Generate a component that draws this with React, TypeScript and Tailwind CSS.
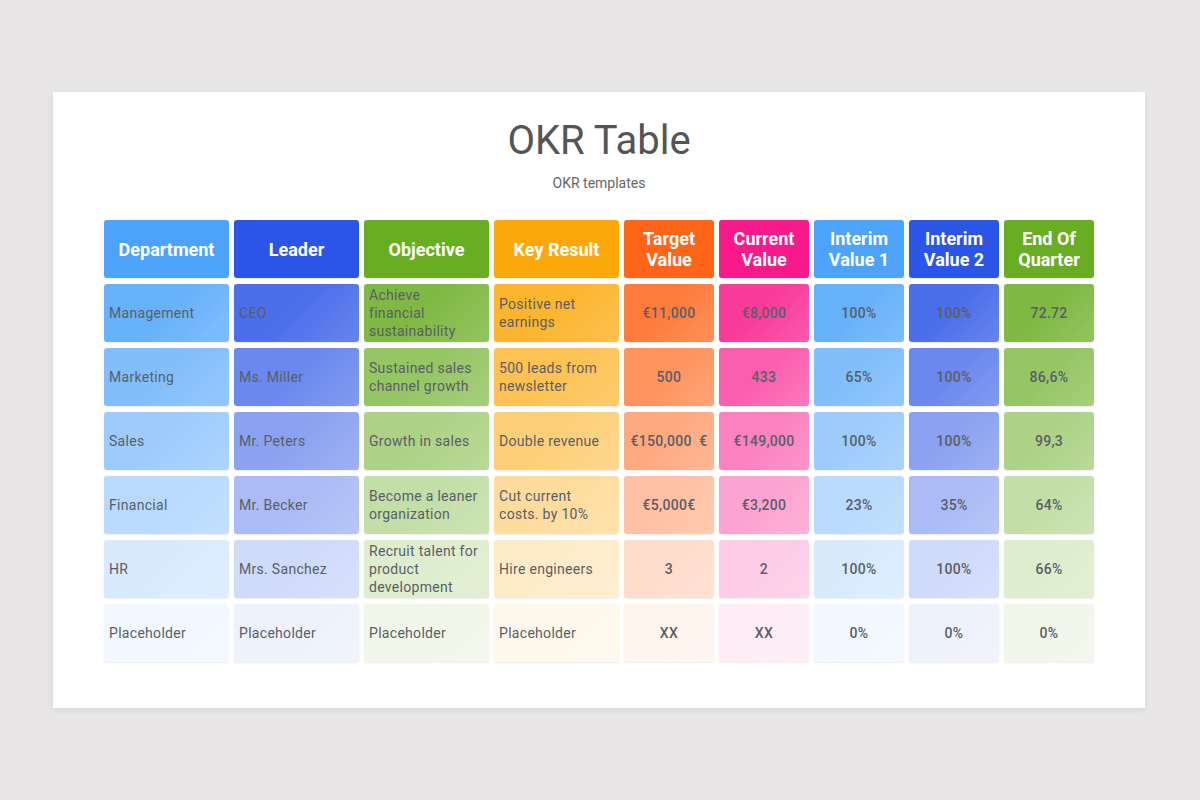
const FONT = { fontFamily: 'Roboto, "Noto Sans", "Liberation Sans", sans-serif' };

// header colours and the faded body tints, one class per row
const BLUE = ['bg-[#4ca3f9]/[0.85]', 'bg-[#4ca3f9]/[0.7]', 'bg-[#4ca3f9]/[0.55]', 'bg-[#4ca3f9]/[0.4]', 'bg-[#4ca3f9]/[0.22]', 'bg-[#4ca3f9]/[0.08]'];
const ROYAL = ['bg-[#2b55e6]/[0.85]', 'bg-[#2b55e6]/[0.7]', 'bg-[#2b55e6]/[0.55]', 'bg-[#2b55e6]/[0.4]', 'bg-[#2b55e6]/[0.22]', 'bg-[#2b55e6]/[0.08]'];
const GREEN = ['bg-[#69ad22]/[0.85]', 'bg-[#69ad22]/[0.7]', 'bg-[#69ad22]/[0.55]', 'bg-[#69ad22]/[0.4]', 'bg-[#69ad22]/[0.22]', 'bg-[#69ad22]/[0.1]'];
const AMBER = ['bg-[#fca80a]/[0.85]', 'bg-[#fca80a]/[0.7]', 'bg-[#fca80a]/[0.55]', 'bg-[#fca80a]/[0.4]', 'bg-[#fca80a]/[0.22]', 'bg-[#fca80a]/[0.08]'];
const ORANGE = ['bg-[#fe6519]/[0.85]', 'bg-[#fe6519]/[0.7]', 'bg-[#fe6519]/[0.55]', 'bg-[#fe6519]/[0.4]', 'bg-[#fe6519]/[0.22]', 'bg-[#fe6519]/[0.08]'];
const PINK = ['bg-[#f8198b]/[0.85]', 'bg-[#f8198b]/[0.7]', 'bg-[#f8198b]/[0.55]', 'bg-[#f8198b]/[0.4]', 'bg-[#f8198b]/[0.22]', 'bg-[#f8198b]/[0.08]'];

const COLUMNS = [
  { label: ['Department'], head: 'bg-[#4ca3f9]', tints: BLUE, text: true },
  { label: ['Leader'], head: 'bg-[#2b55e6]', tints: ROYAL, text: true },
  { label: ['Objective'], head: 'bg-[#69ad22]', tints: GREEN, text: true },
  { label: ['Key Result'], head: 'bg-[#fca80a]', tints: AMBER, text: true },
  { label: ['Target', 'Value'], head: 'bg-[#fe6519]', tints: ORANGE, text: false },
  { label: ['Current', 'Value'], head: 'bg-[#f8198b]', tints: PINK, text: false },
  { label: ['Interim', 'Value 1'], head: 'bg-[#4ca3f9]', tints: BLUE, text: false },
  { label: ['Interim', 'Value 2'], head: 'bg-[#2b55e6]', tints: ROYAL, text: false },
  { label: ['End Of', 'Quarter'], head: 'bg-[#69ad22]', tints: GREEN, text: false },
];

const ROWS = [
  ['Management', 'CEO', 'Achieve\nfinancial sustainability', 'Positive net earnings', '€11,000', '€8,000', '100%', '100%', '72.72'],
  ['Marketing', 'Ms. Miller', 'Sustained sales channel growth', '500 leads from newsletter', '500', '433', '65%', '100%', '86,6%'],
  ['Sales', 'Mr. Peters', 'Growth in sales', 'Double revenue', '€150,000  €', '€149,000', '100%', '100%', '99,3'],
  ['Financial', 'Mr. Becker', 'Become a leaner organization', 'Cut current costs. by 10%', '€5,000€', '€3,200', '23%', '35%', '64%'],
  ['HR', 'Mrs. Sanchez', 'Recruit talent for product development', 'Hire engineers', '3', '2', '100%', '100%', '66%'],
  ['Placeholder', 'Placeholder', 'Placeholder', 'Placeholder', 'XX', 'XX', '0%', '0%', '0%'],
];

const CELL = 'h-[58px] rounded-[3px] shadow-[0_1px_2px_rgba(0,0,0,0.08)]';
const SHEEN = 'bg-[linear-gradient(135deg,rgba(255,255,255,0)_45%,rgba(255,255,255,0.16))]';

export default function App() {
  return (
    <div className="w-full h-[800px] bg-[#e8e6e7] pt-[92px] px-[53px]" style={FONT}>
      <div className="w-[1092px] h-[616px] bg-white shadow-[0_2px_6px_rgba(0,0,0,0.08)] flex flex-col items-center pt-[25px]">
        <h1 className="text-[40px] leading-[48px] font-normal text-[#555555]">OKR Table</h1>
        <p className="mt-[8px] text-[14px] leading-[20px] text-[#666666]">OKR templates</p>

        <div className="mt-[27px] grid grid-cols-[125px_125px_125px_125px_90px_90px_90px_90px_90px] gap-x-[5px] gap-y-[6px]">
          {COLUMNS.map((col, i) => (
            <div
              key={`h${i}`}
              className={`${CELL} ${col.head} flex flex-col items-center justify-center text-white font-bold text-[18px] leading-[21px] text-center`}
            >
              {col.label.map((l) => (
                <span key={l}>{l}</span>
              ))}
            </div>
          ))}

          {ROWS.map((row, r) =>
            row.map((value, c) => {
              const col = COLUMNS[c];
              return (
                <div
                  key={`${r}-${c}`}
                  className={`${CELL} ${col.tints[r]} ${SHEEN} flex items-center text-[14px] leading-[18px] tracking-[0.3px] text-[#5a5e66] ${
                    col.text ? 'pl-[5px] pr-[8px] whitespace-pre-line' : 'justify-center font-medium text-center whitespace-pre'
                  }`}
                >
                  <span className={col.text ? 'w-full' : ''}>{value}</span>
                </div>
              );
            })
          )}
        </div>
      </div>
    </div>
  );
}
